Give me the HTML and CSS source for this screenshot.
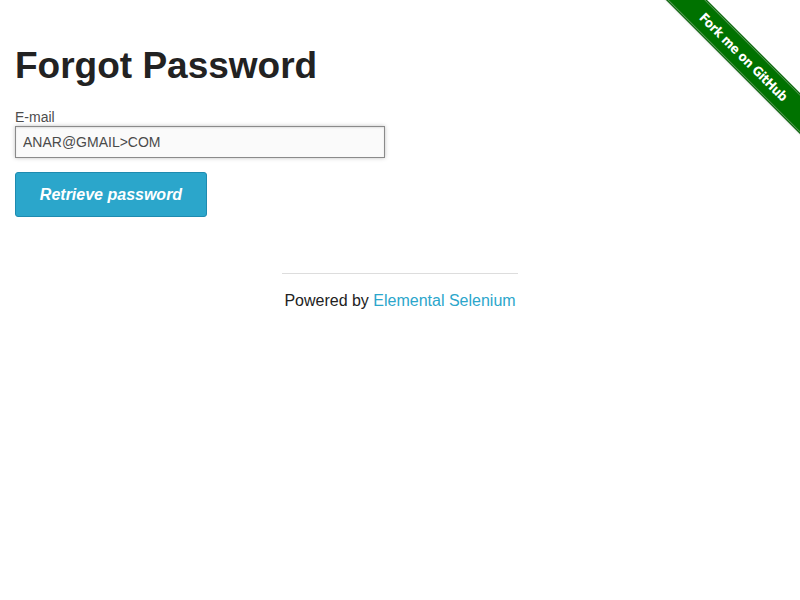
FILE: index.html
```html
<!DOCTYPE html>
<html>
<head>
<meta charset="utf-8">
<link rel="stylesheet" href="styles.css">
</head>
<body>
<a class="ribbon" href="#"><span class="ribbon-band">Fork me on GitHub</span></a>
<div class="page">
  <div class="content">
    <h1 class="title">Forgot Password</h1>
    <form class="form">
      <label class="label" for="email">E-mail</label>
      <input class="input" id="email" type="text" value="ANAR@GMAIL>COM">
      <button class="button" type="button">Retrieve password</button>
    </form>
  </div>
  <div class="footer">
    <hr class="rule">
    <div class="powered">Powered by <a class="link" href="#">Elemental Selenium</a></div>
  </div>
</div>
</body>
</html>
```
FILE: styles.css
```css
html, body {
  margin: 0;
  padding: 0;
  background: #fff;
}
body {
  font-family: "Liberation Sans", Arial, sans-serif;
  color: #222;
  overflow: hidden;
  width: 800px;
  height: 600px;
  position: relative;
}
.page {
  padding: 0 15px;
}
.title {
  font-size: 37px;
  font-weight: bold;
  color: #222;
  margin: 44px 0 0 0;
  line-height: 44px;
}
.form {
  display: flex;
  flex-direction: column;
  align-items: flex-start;
  margin-top: 21px;
}
.label {
  font-size: 14px;
  color: #4d4d4d;
  line-height: 17px;
}
.input {
  box-sizing: border-box;
  width: 370px;
  height: 32px;
  border: 1px solid #8a8a8a;
  background: #fafafa;
  box-shadow: inset 0 1px 2px rgba(0,0,0,0.1), 0 0 4px rgba(0,0,0,0.25);
  font-family: "Liberation Sans", Arial, sans-serif;
  font-size: 14px;
  color: #4a4a4a;
  padding: 0 7px;
  margin: 0;
}
.button {
  box-sizing: border-box;
  margin-top: 14px;
  width: 192px;
  height: 45px;
  background: #2ba6cb;
  border: 1px solid #1e8bb0;
  border-radius: 3px;
  color: #fff;
  font-family: "Liberation Sans", Arial, sans-serif;
  font-size: 16px;
  font-weight: bold;
  font-style: italic;
  padding: 0;
}
.footer {
  display: flex;
  flex-direction: column;
  align-items: center;
  margin-top: 56px;
}
.rule {
  width: 236px;
  border: 0;
  border-top: 1px solid #ddd;
  margin: 0;
}
.powered {
  font-size: 16px;
  color: #222;
  margin-top: 17px;
  line-height: 20px;
}
.link {
  color: #2ba6cb;
  text-decoration: none;
}
.ribbon {
  position: absolute;
  top: 0;
  right: 0;
  width: 149px;
  height: 149px;
  overflow: hidden;
  text-decoration: none;
}
.ribbon-band {
  position: absolute;
  top: 40px;
  right: -45px;
  width: 210px;
  height: 25px;
  line-height: 25px;
  background: #007200;
  border-top: 1px solid #5a9a5a;
  border-bottom: 1px solid #5a9a5a;
  box-shadow: 0 0 0 1px #006000, 0 1px 2px rgba(0,0,0,0.3);
  transform: rotate(45deg);
  color: #fff;
  text-align: center;
  text-indent: 10px;
  font-family: "DejaVu Sans Condensed", "Liberation Sans Narrow", sans-serif;
  font-weight: bold;
  font-size: 13px;
  letter-spacing: -0.3px;
}
```
